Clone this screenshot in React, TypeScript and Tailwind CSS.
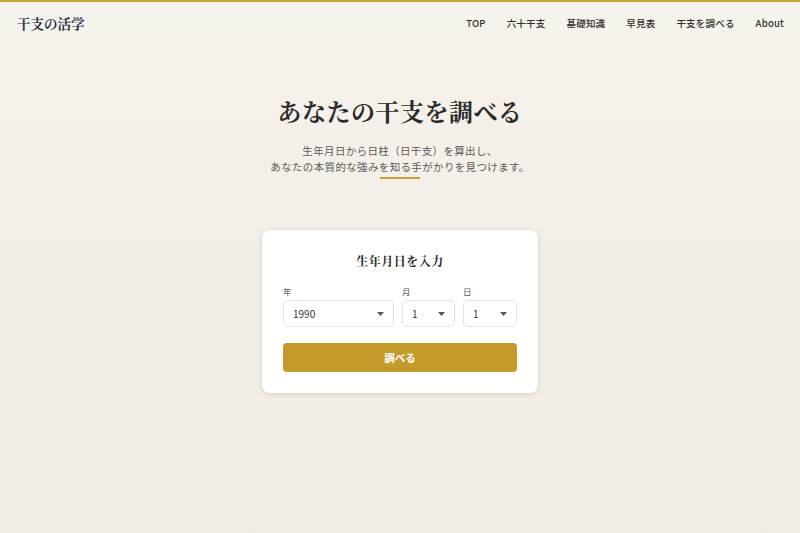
const navItems = ['TOP', '六十干支', '基礎知識', '早見表', '干支を調べる', 'About'];

const serif = "font-['Noto_Serif_CJK_JP','Noto_Serif_JP','Liberation_Serif','Noto_Sans_CJK_JP',serif]";

const SelectBox = ({ value }: { value: string }) => (
  <div className="flex items-center justify-between h-[27px] pl-[9px] pr-[9px] bg-white border border-[#e6e2da] rounded-[5px] text-[10px] text-[#333]">
    <span>{value}</span>
    <svg width="7" height="4" viewBox="0 0 7 4">
      <path d="M0 0h7L3.5 4z" fill="#555" />
    </svg>
  </div>
);

export default function App() {
  return (
    <div className="min-h-screen w-full bg-gradient-to-b from-[#f6f2ec] to-[#f1ece3] font-['Noto_Sans_CJK_JP','Noto_Sans',sans-serif] text-[#333]">
      {/* header */}
      <header className="h-[44px] border-t-2 border-[#c9a233] flex items-center justify-between pl-[17px] pr-[16px]">
        <div className={`${serif} text-[13.5px] font-bold text-[#253550]`}>干支の活学</div>
        <nav className="flex items-center gap-[21px] text-[9.5px] font-medium text-[#2e2e2e] tracking-[0.2px]">
          {navItems.map((item) => (
            <span key={item}>{item}</span>
          ))}
        </nav>
      </header>

      {/* hero */}
      <section className="flex flex-col items-center pt-[50px]">
        <h1 className={`${serif} text-[24px] font-bold text-[#2b2b2b] leading-[34px] tracking-[0.5px]`}>
          あなたの干支を調べる
        </h1>
        <p className="mt-[15px] text-[10.5px] leading-[16px] text-[#5a5a5a] text-center tracking-[0.35px]">
          生年月日から日柱（日干支）を算出し、
          <br />
          あなたの本質的な強みを知る手がかりを見つけます。
        </p>
        <div className="mt-[2px] w-[40px] h-[2px] bg-[#c9a233]" />
      </section>

      {/* form card */}
      <div className="flex justify-center pt-[51px]">
        <div className="w-[276px] bg-white rounded-[8px] shadow-[0_1px_6px_rgba(0,0,0,0.12)] px-[21px] pt-[22px] pb-[21px]">
          <h2 className={`${serif} text-center text-[12px] font-bold text-[#2b2b2b] tracking-[0.5px]`}>生年月日を入力</h2>
          <div className="mt-[15px] flex gap-[8px]">
            <div className="flex flex-col w-[111px]">
              <label className="text-[8.5px] text-[#555] leading-[12px] mb-[3px]">年</label>
              <SelectBox value="1990" />
            </div>
            <div className="flex flex-col w-[53px]">
              <label className="text-[8.5px] text-[#555] leading-[12px] mb-[3px]">月</label>
              <SelectBox value="1" />
            </div>
            <div className="flex flex-col w-[54px]">
              <label className="text-[8.5px] text-[#555] leading-[12px] mb-[3px]">日</label>
              <SelectBox value="1" />
            </div>
          </div>
          <button className="mt-[16px] w-full h-[29px] rounded-[4px] bg-[#c49a2b] text-white text-[10.5px] font-bold">
            調べる
          </button>
        </div>
      </div>
    </div>
  );
}
